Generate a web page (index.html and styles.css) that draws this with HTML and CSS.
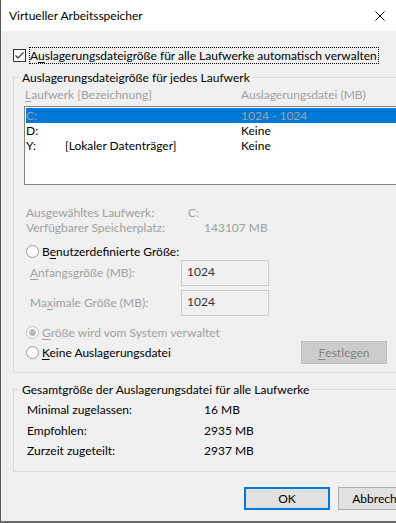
FILE: index.html
```html
<!DOCTYPE html>
<html lang="de">
<head>
    <meta charset="UTF-8">
    <meta name="viewport" content="width=device-width, initial-scale=1.0">
    <title>Virtueller Arbeitsspeicher</title>
    <link rel="stylesheet" href="styles.css">
</head>
<body>
    <div class="window">
        <div class="titlebar">
            <span class="title">Virtueller Arbeitsspeicher</span>
            <span class="close">
                <svg width="10" height="10" viewBox="0 0 10 10"><path d="M0.5 0.5 L9.5 9.5 M9.5 0.5 L0.5 9.5" stroke="#000" stroke-width="1" fill="none"/></svg>
            </span>
        </div>

        <div class="content">
            <div class="check-row">
                <span class="checkbox">
                    <svg width="11" height="11" viewBox="0 0 11 11"><path d="M1.5 5.5 L4 8 L9.5 2.5" stroke="#333" stroke-width="1.2" fill="none"/></svg>
                </span>
                <span class="focus">A<u>u</u>slagerungsdateigröße für alle Laufwerke automatisch verwalten</span>
            </div>

            <fieldset class="group drives">
                <legend>Auslagerungsdateigröße für jedes Laufwerk</legend>
                <div class="cols gray">
                    <span><u>L</u>aufwerk [Bezeichnung]</span>
                    <span>Auslagerungsdatei (MB)</span>
                </div>
                <div class="listbox">
                    <div class="row selected"><span>C:</span><span></span><span>1024 - 1024</span></div>
                    <div class="row"><span>D:</span><span></span><span>Keine</span></div>
                    <div class="row"><span>Y:</span><span>[Lokaler Datenträger]</span><span>Keine</span></div>
                </div>

                <div class="info gray">
                    <div class="info-row sel"><span>Ausgewähltes Laufwerk:</span><span>C:</span></div>
                    <div class="info-row free"><span>Verfügbarer Speicherplatz:</span><span>143107 MB</span></div>
                </div>

                <div class="radio-row custom">
                    <span class="radio"></span>
                    <span>B<u>e</u>nutzerdefinierte Größe:</span>
                </div>
                <div class="size-row first">
                    <span class="size-label gray"><u>A</u>nfangsgröße (MB):</span>
                    <span class="textbox">1024</span>
                </div>
                <div class="size-row">
                    <span class="size-label gray">Ma<u>x</u>imale Größe (MB):</span>
                    <span class="textbox">1024</span>
                </div>

                <div class="radio-row system gray">
                    <span class="radio checked"></span>
                    <span><u>G</u>röße wird vom System verwaltet</span>
                </div>
                <div class="none-row">
                    <div class="radio-row">
                        <span class="radio"></span>
                        <span><u>K</u>eine Auslagerungsdatei</span>
                    </div>
                    <span class="btn disabled"><u>F</u>estlegen</span>
                </div>
            </fieldset>

            <fieldset class="group totals">
                <legend>Gesamtgröße der Auslagerungsdatei für alle Laufwerke</legend>
                <div class="total-row"><span>Minimal zugelassen:</span><span>16 MB</span></div>
                <div class="total-row"><span>Empfohlen:</span><span>2935 MB</span></div>
                <div class="total-row"><span>Zurzeit zugeteilt:</span><span>2937 MB</span></div>
            </fieldset>

            <div class="buttons">
                <span class="btn default">OK</span>
                <span class="btn">Abbrechen</span>
            </div>
        </div>
    </div>
</body>
</html>
```

FILE: styles.css
```css
*{
    margin: 0;
    padding: 0;
    box-sizing: border-box;
}
html, body{
    overflow: hidden;
}
body{
    width: 396px;
    height: 523px;
    background-color: #f0f0f0;
    font-family: Lato, "Noto Sans", sans-serif;
    font-size: 12px;
    line-height: 15px;
    color: #000;
}
u{
    text-decoration: underline;
    text-underline-offset: 2px;
}
.gray{
    color: #a0a0a0;
}

.window{
    width: 436px;
    height: 523px;
    border-left: 1px solid #5a5a5a;
    border-bottom: 2px solid #6b6b6b;
    background-color: #f0f0f0;
}
.titlebar{
    height: 31px;
    background-color: #fff;
    display: flex;
    align-items: center;
    padding-left: 8px;
}
.titlebar .title{
    flex: 1;
}
.close{
    width: 46px;
    height: 31px;
    margin-right: 33px;
    display: flex;
    align-items: center;
    justify-content: center;
}

.content{
    padding: 16px 12px 0 12px;
}

.check-row{
    display: flex;
    align-items: center;
    height: 17px;
}
.checkbox{
    width: 13px;
    height: 13px;
    border: 1px solid #333;
    background-color: #fff;
    display: flex;
    align-items: center;
    justify-content: center;
    margin-right: 3px;
}
.focus{
    border: 1px dotted #000;
    height: 17px;
    padding-right: 1px;
}

.group{
    border: 1px solid #dcdcdc;
    padding-left: 10px;
}
.group legend{
    margin-left: -4px;
    padding: 0 2px;
    line-height: 15px;
}
.drives{
    margin-top: 6px;
    padding-top: 2px;
    padding-bottom: 8px;
}

.cols{
    display: grid;
    grid-template-columns: 216px 1fr;
    padding-left: 1px;
}
.listbox{
    margin-top: 4px;
    height: 79px;
    border: 1px solid #828282;
    background-color: #fff;
    padding: 1px;
}
.row{
    display: grid;
    grid-template-columns: 39px 176px 1fr;
    height: 15px;
}
.row.selected{
    background-color: #0078d7;
    color: #a0a0a0;
}

.info{
    margin-top: 20px;
    padding-left: 2px;
}
.info-row{
    display: grid;
}
.info-row.sel{
    grid-template-columns: 162px 1fr;
}
.info-row.free{
    grid-template-columns: 178px 1fr;
}

.radio-row{
    display: flex;
    align-items: center;
    height: 15px;
    padding-left: 2px;
}
.radio{
    width: 13px;
    height: 13px;
    border-radius: 50%;
    border: 1px solid #999;
    background-color: #fff;
    margin-right: 3px;
    display: flex;
    align-items: center;
    justify-content: center;
}
.radio.checked{
    border-color: #bcbcbc;
}
.radio.checked::after{
    content: "";
    width: 7px;
    height: 7px;
    border-radius: 50%;
    background-color: #bcbcbc;
}
.radio-row.custom{
    margin-top: 9px;
}
.radio-row.system{
    margin-top: 9px;
}

.size-row{
    display: flex;
    margin-top: 4px;
}
.size-row.first{
    margin-top: 1px;
}
.size-label{
    width: 157px;
    padding-left: 6px;
    padding-top: 5px;
}
.textbox{
    width: 88px;
    height: 26px;
    border: 1px solid #ccc;
    padding: 3px 5px;
    color: #333;
}

.none-row{
    display: grid;
    grid-template-columns: 277px 86px;
    align-items: center;
    height: 23px;
    margin-top: 1px;
}

.btn{
    display: flex;
    align-items: center;
    justify-content: center;
    width: 86px;
    height: 23px;
    border: 1px solid #adadad;
    background-color: #e1e1e1;
}
.btn.disabled{
    border-color: #bfbfbf;
    background-color: #cccccc;
    color: #838383;
}
.btn.default{
    border: 2px solid #0078d7;
}

.totals{
    margin-top: 9px;
    padding-top: 3px;
    padding-bottom: 9px;
}
.total-row{
    display: grid;
    grid-template-columns: 177px 1fr;
    padding-left: 3px;
    line-height: 20.6px;
}

.buttons{
    display: flex;
    justify-content: flex-end;
    gap: 8px;
    margin-top: 15px;
}
```
